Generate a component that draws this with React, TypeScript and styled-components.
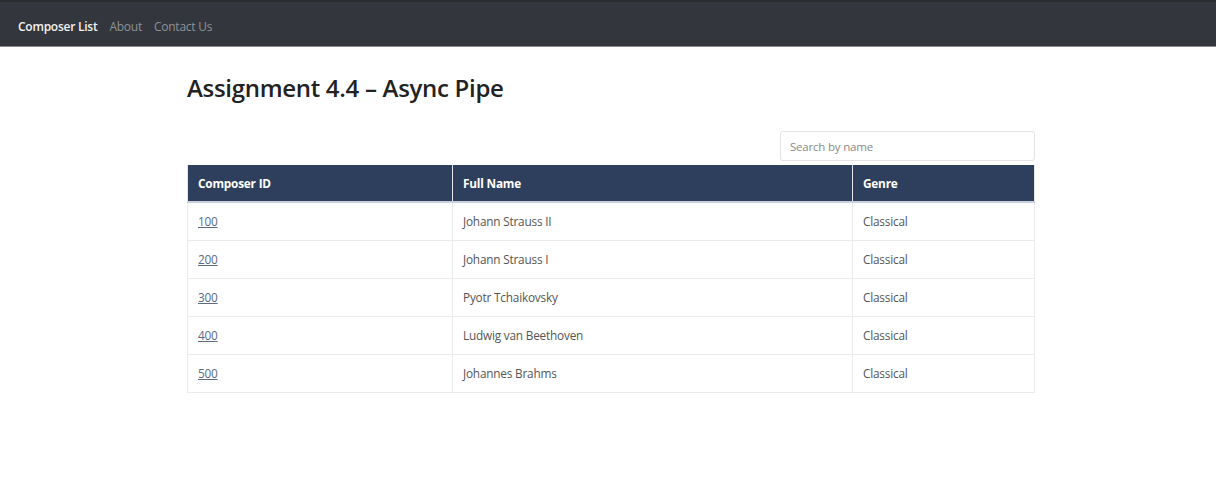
import React from "react";
import styled, { createGlobalStyle } from "styled-components";

const Global = createGlobalStyle`
  html, body { margin: 0; padding: 0; background: #fff; }
  body { font-family: "Open Sans", "Noto Sans", sans-serif; color: #333; }
`;

const Nav = styled.nav`
  height: 47px;
  background: #33363c;
  border-top: 2px solid #2a2c30;
  box-sizing: border-box;
  display: flex;
  align-items: center;
  padding: 4px 18px 0;
  gap: 12px;
  border-bottom: 1px solid #888;
`;

const NavLink = styled.a<{ $active?: boolean }>`
  font-size: 12px;
  letter-spacing: -0.25px;
  font-weight: ${(p) => (p.$active ? 600 : 400)};
  color: ${(p) => (p.$active ? "#f2f2f2" : "#8e9196")};
  text-decoration: none;
`;

const Main = styled.main`
  width: 848px;
  margin: 0 auto;
  padding-top: 24px;
  transform: translateX(3px);
`;

const Title = styled.h1`
  margin: 0;
  font-size: 24px;
  font-weight: 600;
  letter-spacing: -0.3px;
  color: #222;
  line-height: 34px;
`;

const SearchRow = styled.div`
  display: flex;
  justify-content: flex-end;
  margin-top: 26px;
  margin-bottom: 4px;
`;

const Search = styled.input`
  width: 255px;
  height: 30px;
  box-sizing: border-box;
  border: 1px solid #e3e3e3;
  border-radius: 3px;
  padding: 0 9px;
  font-family: inherit;
  font-size: 11.5px;
  letter-spacing: -0.2px;
  color: #555;
  &::placeholder { color: #8a8a8a; }
`;

const Table = styled.table`
  width: 100%;
  table-layout: fixed;
  border-collapse: collapse;
  font-size: 11.8px;
  letter-spacing: -0.2px;
`;

const Th = styled.th<{ $w?: number }>`
  background: #2d3f5c;
  color: #fff;
  font-weight: 700;
  text-align: left;
  height: 37px;
  padding: 0 10px;
  border: 1px solid #e6e6e6;
  border-top: none;
  border-bottom: 2px solid #c9cfd8;
  width: ${(p) => (p.$w ? `${p.$w}px` : "auto")};
  box-sizing: border-box;
`;

const Td = styled.td`
  height: 38px;
  padding: 0 10px;
  border: 1px solid #ebebeb;
  color: #555;
  box-sizing: border-box;
`;

const IdLink = styled.a`
  color: #5a6a85;
  text-decoration: underline;
`;

const composers = [
  { id: 100, name: "Johann Strauss II", genre: "Classical" },
  { id: 200, name: "Johann Strauss I", genre: "Classical" },
  { id: 300, name: "Pyotr Tchaikovsky", genre: "Classical" },
  { id: 400, name: "Ludwig van Beethoven", genre: "Classical" },
  { id: 500, name: "Johannes Brahms", genre: "Classical" },
];

export default function App() {
  return (
    <>
      <Global />
      <Nav>
        <NavLink $active href="#">Composer List</NavLink>
        <NavLink href="#">About</NavLink>
        <NavLink href="#">Contact Us</NavLink>
      </Nav>
      <Main>
        <Title>Assignment 4.4 – Async Pipe</Title>
        <SearchRow>
          <Search placeholder="Search by name" />
        </SearchRow>
        <Table>
          <thead>
            <tr>
              <Th $w={265}>Composer ID</Th>
              <Th $w={400}>Full Name</Th>
              <Th>Genre</Th>
            </tr>
          </thead>
          <tbody>
            {composers.map((c) => (
              <tr key={c.id}>
                <Td><IdLink href="#">{c.id}</IdLink></Td>
                <Td>{c.name}</Td>
                <Td>{c.genre}</Td>
              </tr>
            ))}
          </tbody>
        </Table>
      </Main>
    </>
  );
}
